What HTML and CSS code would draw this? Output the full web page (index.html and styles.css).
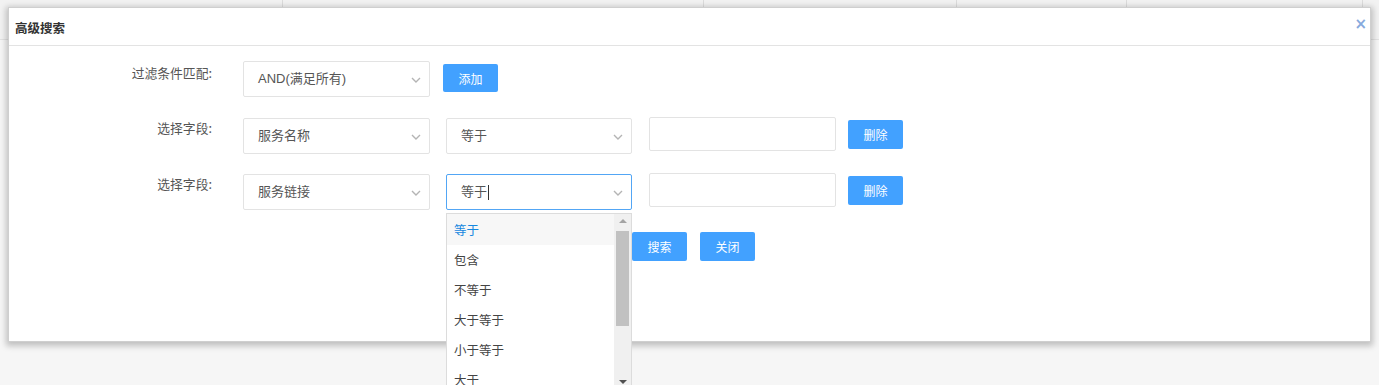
FILE: index.html
```html
<!DOCTYPE html>
<html lang="zh-CN">
<head>
<meta charset="utf-8">
<title>高级搜索</title>
<link rel="stylesheet" href="styles.css">
</head>
<body>
<div class="page">
  <div class="table-head">
    <div class="th c1"></div>
    <div class="th c2"></div>
    <div class="th c3"></div>
    <div class="th c4"></div>
    <div class="th c5"></div>
    <div class="th c6"></div>
  </div>
</div>

<div class="modal">
  <div class="modal-header">
    <span class="modal-title">高级搜索</span>
    <span class="modal-close">×</span>
  </div>
  <div class="modal-body">
    <div class="form-row row1">
      <label class="form-label">过滤条件匹配:</label>
      <div class="select sel-field">
        <span class="select-text">AND(满足所有)</span>
        <svg class="chev" width="10" height="6" viewBox="0 0 10 6"><polyline points="1,1 5,5 9,1" fill="none" stroke="#b4b4b4" stroke-width="1.4"/></svg>
      </div>
      <button class="btn btn-add">添加</button>
    </div>

    <div class="form-row row2">
      <label class="form-label">选择字段:</label>
      <div class="select sel-field">
        <span class="select-text">服务名称</span>
        <svg class="chev" width="10" height="6" viewBox="0 0 10 6"><polyline points="1,1 5,5 9,1" fill="none" stroke="#b4b4b4" stroke-width="1.4"/></svg>
      </div>
      <div class="select sel-op">
        <span class="select-text">等于</span>
        <svg class="chev" width="10" height="6" viewBox="0 0 10 6"><polyline points="1,1 5,5 9,1" fill="none" stroke="#b4b4b4" stroke-width="1.4"/></svg>
      </div>
      <input class="text-input" type="text">
      <button class="btn btn-del">删除</button>
    </div>

    <div class="form-row row3">
      <label class="form-label">选择字段:</label>
      <div class="select sel-field">
        <span class="select-text">服务链接</span>
        <svg class="chev" width="10" height="6" viewBox="0 0 10 6"><polyline points="1,1 5,5 9,1" fill="none" stroke="#b4b4b4" stroke-width="1.4"/></svg>
      </div>
      <div class="select sel-op focused">
        <span class="select-text">等于<span class="caret"></span></span>
        <svg class="chev" width="10" height="6" viewBox="0 0 10 6"><polyline points="1,1 5,5 9,1" fill="none" stroke="#b4b4b4" stroke-width="1.4"/></svg>
        <div class="dropdown">
          <ul class="dropdown-list">
            <li class="active">等于</li>
            <li>包含</li>
            <li>不等于</li>
            <li>大于等于</li>
            <li>小于等于</li>
            <li>大于</li>
          </ul>
          <div class="scrollbar">
            <span class="arrow up"></span>
            <span class="thumb"></span>
            <span class="arrow down"></span>
          </div>
        </div>
      </div>
      <input class="text-input" type="text">
      <button class="btn btn-del">删除</button>
    </div>

    <div class="actions">
      <button class="btn">搜索</button>
      <button class="btn">关闭</button>
    </div>
  </div>
</div>
</body>
</html>
```

FILE: styles.css
```css
* { box-sizing: border-box; }

html, body {
  margin: 0;
  padding: 0;
}

body {
  width: 1379px;
  height: 385px;
  overflow: hidden;
  background: #f6f6f6;
  font-family: "Liberation Sans", "Noto Sans CJK SC", sans-serif;
  font-size: 13px;
  color: #555;
}

.page {
  height: 385px;
}

.table-head {
  display: flex;
  height: 40px;
  background: #f2f2f2;
  border-bottom: 1px solid #e2e2e2;
}

.th {
  height: 100%;
  border-right: 1px solid #dcdcdc;
}
.c1 { width: 283px; }
.c2 { width: 421px; }
.c3 { width: 253px; }
.c4 { width: 170px; }
.c5 { width: 236px; }
.c6 { flex: 1; border-right: none; }

/* modal overlays the page */
.modal {
  position: absolute;
  left: 8px;
  top: 7px;
  width: 1363px;
  height: 335px;
  background: #fff;
  border: 1px solid #cfcfcf;
  box-shadow: 0 2px 6px 2px rgba(0, 0, 0, 0.22);
}

.modal-header {
  height: 38px;
  display: flex;
  align-items: center;
  justify-content: space-between;
  padding: 0 3px 0 6px;
  border-bottom: 1px solid #e3e3e3;
}

.modal-title {
  font-family: "Noto Sans CJK SC", sans-serif;
  font-size: 12.5px;
  font-weight: bold;
  color: #333;
  line-height: 16px;
  margin-top: 2px;
}

.modal-close {
  font-family: "DejaVu Sans", sans-serif;
  font-size: 15px;
  font-weight: bold;
  color: #86a9dd;
  line-height: 14px;
  margin-top: -6px;
}

.modal-body {
  padding-top: 15px;
  position: relative;
}

.form-row {
  display: flex;
  align-items: flex-start;
  height: 36px;
}
.row2 { margin-top: 21px; }
.row3 { margin-top: 20px; }

.form-label {
  width: 203px;
  text-align: right;
  margin-right: 31px;
  font-family: "Noto Sans CJK SC", sans-serif;
  font-size: 12.8px;
  line-height: 18px;
  color: #555;
  padding-top: 3px;
}
.row2 .form-label, .row3 .form-label { padding-top: 1px; }

.select {
  position: relative;
  height: 36px;
  border: 1px solid #e3e3e3;
  border-radius: 2px;
  background: #fff;
  display: flex;
  align-items: center;
  padding-left: 14px;
}

.sel-field { width: 187px; }
.sel-op { width: 186px; margin-left: 16px; }

.select.focused { border-color: #52a6f5; }

.select-text {
  font-family: "Liberation Sans", "Noto Sans CJK SC", sans-serif;
  font-size: 13px;
  color: #555;
  line-height: 18px;
  display: flex;
  align-items: center;
}

.caret {
  display: inline-block;
  width: 1px;
  height: 15px;
  background: #333;
  margin-left: 1px;
}

.chev {
  position: absolute;
  right: 8px;
  top: 15px;
}

.text-input {
  width: 187px;
  height: 34px;
  margin-left: 17px;
  margin-top: -1px;
  border: 1px solid #e3e3e3;
  border-radius: 2px;
  background: #fff;
  outline: none;
}

.btn {
  width: 55px;
  height: 29px;
  border: none;
  border-radius: 2px;
  background: #42a1ff;
  color: #fff;
  font-family: "Noto Sans CJK SC", sans-serif;
  font-size: 12px;
  padding: 0;
  cursor: pointer;
}

.btn-add {
  height: 28px;
  margin-left: 13px;
  margin-top: 3px;
}

.btn-del {
  margin-left: 12px;
  margin-top: 2px;
}

.actions {
  display: flex;
  gap: 13px;
  padding-left: 623px;
  margin-top: 22px;
}

/* dropdown menu lies over the form */
.dropdown {
  position: absolute;
  left: -1px;
  top: 38px;
  width: 186px;
  height: 180px;
  background: #fff;
  border: 1px solid #dcdcdc;
  display: flex;
  z-index: 5;
}

.dropdown-list {
  list-style: none;
  margin: 0;
  padding: 0;
  flex: 1;
}

.dropdown-list li {
  height: 30px;
  line-height: 30px;
  padding-left: 7px;
  font-family: "Noto Sans CJK SC", sans-serif;
  font-size: 12.5px;
  color: #444;
}

.dropdown-list li.active {
  background: #f7f7f7;
  color: #1688e0;
  height: 31px;
  line-height: 31px;
}

.scrollbar {
  width: 17px;
  background: #f0f0f0;
  display: flex;
  flex-direction: column;
  align-items: center;
  position: relative;
}

.arrow {
  width: 0;
  height: 0;
  border-left: 4px solid transparent;
  border-right: 4px solid transparent;
}
.arrow.up {
  border-bottom: 4px solid #a3a3a3;
  margin-top: 5px;
}
.arrow.down {
  position: absolute;
  top: 166px;
  border-top: 4px solid #505050;
}

.thumb {
  width: 13px;
  height: 95px;
  background: #c1c1c1;
  margin-top: 8px;
}
```
